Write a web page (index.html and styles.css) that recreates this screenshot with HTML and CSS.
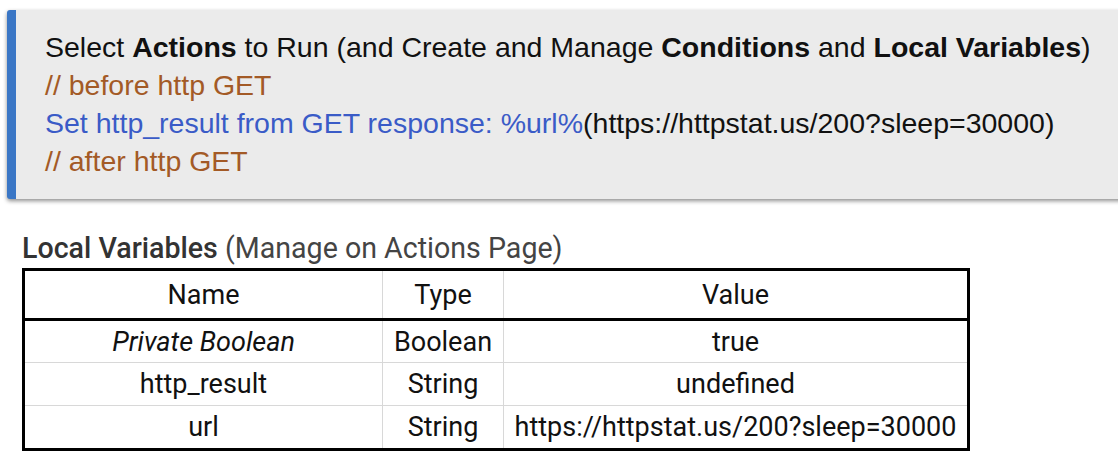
FILE: index.html
```html
<!DOCTYPE html>
<html>
<head>
<meta charset="utf-8">
<link rel="stylesheet" href="styles.css">
</head>
<body>
<div class="box">
  <div class="line">Select <b>Actions</b> to Run (and Create and Manage <b>Conditions</b> and <b>Local Variables</b>)</div>
  <div class="line comment">// before http GET</div>
  <div class="line"><span class="action">Set http_result from GET response: %url%</span>(https://httpstat.us/200?sleep=30000)</div>
  <div class="line comment">// after http GET</div>
</div>
<div class="vars">
  <div class="heading"><span class="strong">Local Variables</span> (Manage on Actions Page)</div>
  <table class="table">
    <colgroup>
      <col class="c-name"><col class="c-type"><col class="c-value">
    </colgroup>
    <thead>
      <tr><th>Name</th><th>Type</th><th>Value</th></tr>
    </thead>
    <tbody>
      <tr><td><i>Private Boolean</i></td><td>Boolean</td><td>true</td></tr>
      <tr><td>http_result</td><td>String</td><td>undefined</td></tr>
      <tr><td>url</td><td>String</td><td>https://httpstat.us/200?sleep=30000</td></tr>
    </tbody>
  </table>
</div>
</body>
</html>
```
FILE: styles.css
```css
html, body {
  margin: 0;
  padding: 0;
  background: #ffffff;
}
body {
  width: 1118px;
  height: 476px;
  overflow: hidden;
}
.box {
  margin: 10px -30px 0 7px;
  background: #ebebeb;
  border-left: 9px solid #3a76c5;
  border-radius: 3px;
  box-shadow: 0 2px 4px rgba(0,0,0,0.45);
  padding: 18px 0 19px 29px;
  font-family: "Liberation Sans", Arial, sans-serif;
  font-size: 28.5px;
  color: #111;
}
.line {
  line-height: 38px;
  white-space: nowrap;
}
.comment {
  color: #a35a26;
}
.action {
  color: #3a5bc7;
}
.vars {
  margin: 33px 0 0 22px;
  font-family: Roboto, "Noto Sans", sans-serif;
}
.heading {
  font-size: 28.6px;
  line-height: 32px;
  color: #444;
}
.strong {
  font-weight: 500;
  color: #333;
}
.table {
  margin-top: 4px;
  border-collapse: collapse;
  table-layout: fixed;
  border: 3px solid #000;
  font-size: 27px;
  color: #111;
}
.table th {
  font-weight: 400;
  height: 47px;
  padding: 0;
  border-bottom: 3px solid #000;
  border-left: 1px solid #d8d8d8;
}
.table td {
  height: 42px;
  padding: 0 4px;
  text-align: center;
  border-top: 1px solid #d8d8d8;
  border-left: 1px solid #d8d8d8;
  white-space: nowrap;
}
.table tbody tr:first-child td {
  border-top: none;
  height: 41px;
}
.c-name { width: 359px; }
.c-type { width: 121px; }
.c-value { width: 465px; }
```
